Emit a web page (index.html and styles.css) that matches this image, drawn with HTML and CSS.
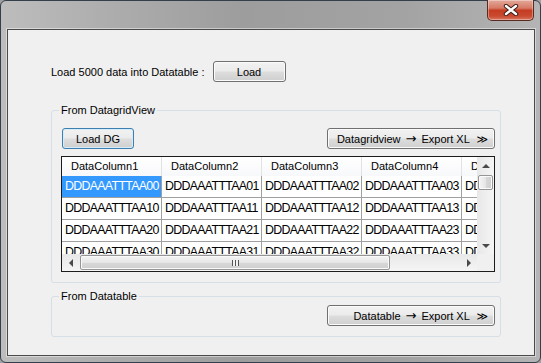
FILE: index.html
```html
<!DOCTYPE html>
<html lang="en">
<head>
    <meta charset="UTF-8">
    <title>Export to Excel</title>
    <link rel="stylesheet" href="styles.css">
</head>
<body>
    <div class="window">
        <div class="close-btn">
            <svg width="16" height="12" viewBox="0 0 16 12">
                <path d="M3 2 L13 10 M13 2 L3 10" stroke="#3b1d18" stroke-width="4.4" stroke-linecap="round"/>
                <path d="M3 2 L13 10 M13 2 L3 10" stroke="#ffffff" stroke-width="2.4" stroke-linecap="round"/>
            </svg>
        </div>

        <div class="client">
            <div class="load-row">
                <span>Load 5000 data into Datatable :</span>
                <button class="btn btn-load">Load</button>
            </div>

            <fieldset class="group group-dg">
                <legend>From DatagridView</legend>
                <div class="toolbar">
                    <button class="btn btn-focus btn-dg">Load DG</button>
                    <button class="btn btn-export">Datagridview <span class="arrow">&rarr;</span> Export XL <span class="chev">&#8811;</span></button>
                </div>

                <div class="grid">
                    <div class="viewport">
                        <div class="row header">
                            <div class="cell">DataColumn1</div>
                            <div class="cell">DataColumn2</div>
                            <div class="cell">DataColumn3</div>
                            <div class="cell">DataColumn4</div>
                            <div class="cell">DataColumn5</div>
                        </div>
                        <div class="row">
                            <div class="cell selected">DDDAAATTTAA00</div>
                            <div class="cell">DDDAAATTTAA01</div>
                            <div class="cell">DDDAAATTTAA02</div>
                            <div class="cell">DDDAAATTTAA03</div>
                            <div class="cell">DDDAAATTTAA04</div>
                        </div>
                        <div class="row">
                            <div class="cell">DDDAAATTTAA10</div>
                            <div class="cell">DDDAAATTTAA11</div>
                            <div class="cell">DDDAAATTTAA12</div>
                            <div class="cell">DDDAAATTTAA13</div>
                            <div class="cell">DDDAAATTTAA14</div>
                        </div>
                        <div class="row">
                            <div class="cell">DDDAAATTTAA20</div>
                            <div class="cell">DDDAAATTTAA21</div>
                            <div class="cell">DDDAAATTTAA22</div>
                            <div class="cell">DDDAAATTTAA23</div>
                            <div class="cell">DDDAAATTTAA24</div>
                        </div>
                        <div class="row">
                            <div class="cell">DDDAAATTTAA30</div>
                            <div class="cell">DDDAAATTTAA31</div>
                            <div class="cell">DDDAAATTTAA32</div>
                            <div class="cell">DDDAAATTTAA33</div>
                            <div class="cell">DDDAAATTTAA34</div>
                        </div>
                    </div>

                    <div class="vscroll">
                        <div class="sb-btn"><span class="tri tri-up"></span></div>
                        <div class="sb-track">
                            <div class="thumb thumb-v"></div>
                        </div>
                        <div class="sb-btn"><span class="tri tri-down"></span></div>
                    </div>

                    <div class="hscroll">
                        <div class="sb-btn"><span class="tri tri-left"></span></div>
                        <div class="sb-track">
                            <div class="thumb thumb-h"><span class="grip"></span></div>
                        </div>
                        <div class="sb-btn"><span class="tri tri-right"></span></div>
                    </div>

                    <div class="corner"></div>
                </div>
            </fieldset>

            <fieldset class="group group-dt">
                <legend>From Datatable</legend>
                <div class="toolbar toolbar-end">
                    <button class="btn btn-export">Datatable <span class="arrow">&rarr;</span> Export XL <span class="chev">&#8811;</span></button>
                </div>
            </fieldset>
        </div>
    </div>
</body>
</html>
```

FILE: styles.css
```css
* {
    box-sizing: border-box;
}

html, body {
    margin: 0;
}

body {
    width: 541px;
    height: 363px;
    overflow: hidden;
    font-family: "Liberation Sans", Arial, sans-serif;
    font-size: 11px;
    color: #000;
    background: #a0a0a0;
}

/* window frame (aero glass, flattened) */
.window {
    position: relative;
    height: 363px;
    display: flex;
    flex-direction: column;
    padding: 28px 5px 6px 6px;
    border: 1px solid #33404b;
    border-radius: 6px;
    background:
        linear-gradient(to right, #bdbdbd 0%, #adadad 20%, #9d9d9d 45%, #a3a3a3 75%, #b4b4b4 100%);
}

.close-btn {
    position: absolute;
    top: -1px;
    left: 486px;
    width: 47px;
    height: 21px;
    display: flex;
    align-items: center;
    justify-content: center;
    border: 1px solid #5a2a22;
    border-top: none;
    border-radius: 0 0 5px 5px;
    background: linear-gradient(#e3a99b 0%, #d67a65 40%, #c53c22 52%, #c9492f 80%, #d8775f 100%);
    box-shadow: inset 0 0 0 1px rgba(255, 255, 255, 0.35);
}

.client {
    flex: 1;
    padding: 31px 0 0 43px;
    background: #f0f0f0;
    border: 1px solid #4a4a4a;
    box-shadow: 0 0 0 1px rgba(255, 255, 255, 0.45);
}

.load-row {
    display: flex;
    align-items: center;
    gap: 8px;
    height: 21px;
}

/* win7 style push buttons */
.btn {
    height: 21px;
    padding: 0;
    font: inherit;
    color: #000;
    border: 1px solid #707070;
    border-radius: 3px;
    background: linear-gradient(#f2f2f2 0%, #ebebeb 48%, #dddddd 52%, #cfcfcf 100%);
    box-shadow: inset 0 0 0 1px #fbfbfb;
}

.btn-load {
    width: 73px;
}

.btn-dg {
    width: 72px;
}

.btn-focus {
    border-color: #3c7fb1;
    box-shadow: inset 0 0 0 1px #d6ecf8;
}

.btn-export {
    width: 168px;
    padding-right: 6px;
    text-align: right;
}

.arrow {
    margin: 0 2px;
    font-family: "DejaVu Sans", sans-serif;
    font-size: 13px;
    line-height: 1;
}

.chev {
    margin-left: 4px;
    font-family: "DejaVu Sans", sans-serif;
    font-size: 11px;
}

/* group boxes */
.group {
    width: 450px;
    min-width: 0;
    margin: 0;
    border: 1px solid #d5dfe5;
    border-radius: 3px;
}

.group legend {
    padding: 0 2px;
    margin-left: -3px;
    line-height: 13px;
}

.group-dg {
    margin-top: 22px;
    padding: 11px 5px 10px 10px;
}

.group-dt {
    margin-top: 7px;
    padding: 2px 5px 10px 10px;
}

.toolbar {
    display: flex;
    justify-content: space-between;
}

.toolbar-end {
    justify-content: flex-end;
}

/* data grid */
.grid {
    display: grid;
    grid-template-columns: 1fr 17px;
    grid-template-rows: 1fr 17px;
    height: 116px;
    margin-top: 7px;
    margin-left: -1px;
    background: #fff;
    border: 1px solid #1c1c1c;
}

.viewport {
    overflow: hidden;
}

.row {
    display: flex;
}

.cell {
    flex: none;
    width: 100px;
    height: 22px;
    padding-left: 3px;
    font-size: 12.4px;
    letter-spacing: -0.7px;
    line-height: 21px;
    white-space: nowrap;
    overflow: hidden;
    border-right: 1px solid #a0a0a0;
    border-bottom: 1px solid #a0a0a0;
}

.header .cell {
    height: 19px;
    padding-left: 9px;
    font-size: 11px;
    letter-spacing: 0;
    line-height: 19px;
    border-right: 1px solid #e2e2e2;
    border-bottom: none;
    background: linear-gradient(#ffffff, #f7f8fa);
}

.cell.selected {
    background: #3399ff;
    color: #fff;
}

/* scrollbars */
.vscroll,
.hscroll {
    display: flex;
    background: linear-gradient(to right, #e8e8e8, #f5f5f5);
}

.vscroll {
    flex-direction: column;
}

.hscroll {
    background: linear-gradient(#e8e8e8, #f5f5f5);
}

.sb-btn {
    flex: none;
    width: 17px;
    height: 17px;
    display: flex;
    align-items: center;
    justify-content: center;
}

.sb-track {
    flex: 1;
    display: flex;
}

.vscroll .sb-track {
    flex-direction: column;
}

.thumb {
    border: 1px solid #959595;
    border-radius: 2px;
    background: linear-gradient(to right, #f5f5f5, #e6e6e6 50%, #d8d8d8 51%, #cfcfcf);
    box-shadow: inset 0 0 0 1px #fafafa;
}

.thumb-v {
    height: 15px;
    margin: 1px 1px 0 1px;
}

.thumb-h {
    width: 310px;
    margin: 1px 0 1px 1px;
    display: flex;
    align-items: center;
    justify-content: center;
    background: linear-gradient(#f5f5f5, #e6e6e6 50%, #d8d8d8 51%, #cfcfcf);
}

.grip {
    width: 7px;
    height: 6px;
    background: repeating-linear-gradient(to right, #555 0 1px, #f2f2f2 1px 3px);
}

.tri {
    width: 0;
    height: 0;
    border: 4px solid transparent;
}

.tri-up {
    border-bottom: 4px solid #4a4a4a;
    border-top-width: 0;
}

.tri-down {
    border-top: 4px solid #4a4a4a;
    border-bottom-width: 0;
}

.tri-left {
    border-right: 4px solid #4a4a4a;
    border-left-width: 0;
}

.tri-right {
    border-left: 4px solid #4a4a4a;
    border-right-width: 0;
}

.corner {
    background: #f0f0f0;
}
```
